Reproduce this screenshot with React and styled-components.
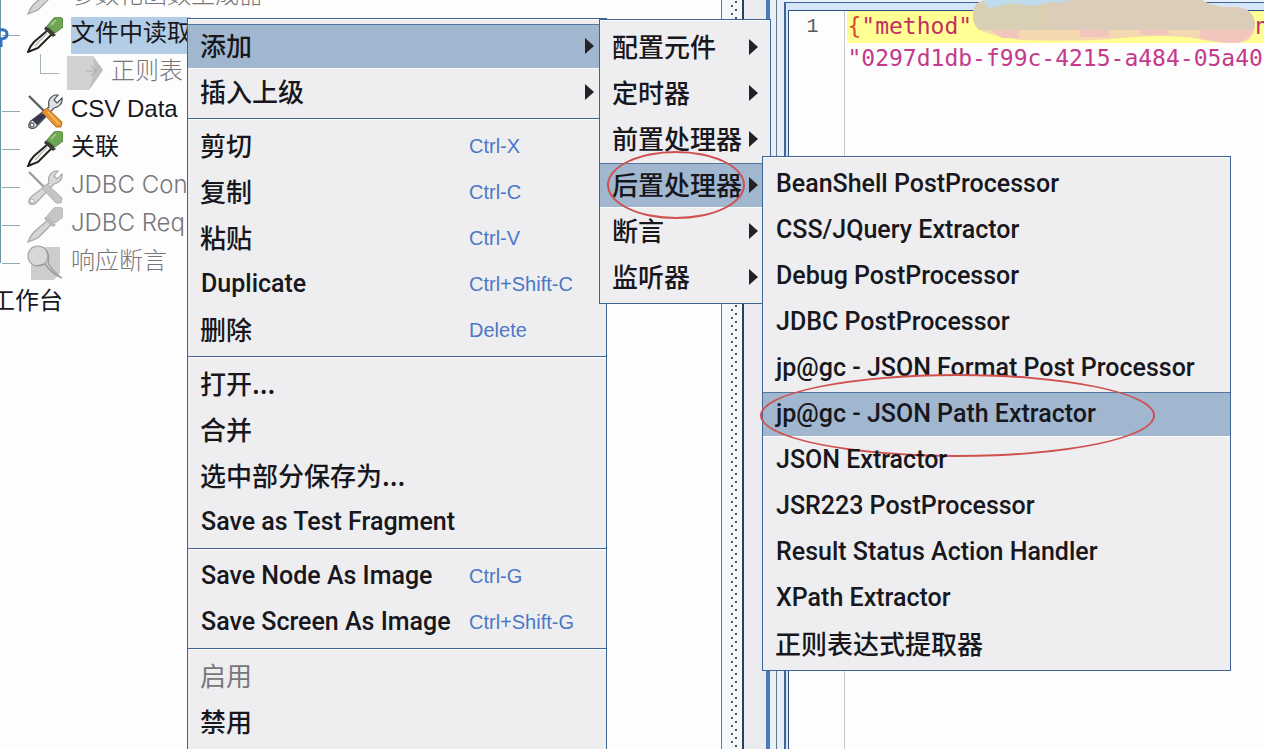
import React from "react";
import styled, { createGlobalStyle, css } from "styled-components";

const cjk = '"Noto Sans CJK SC"';
const line = "#3f6496";

const GlobalStyle = createGlobalStyle`
  * { box-sizing: border-box; }
  body { margin: 0; background: #fdfdfe; }
  button { font: inherit; color: inherit; border: 0; background: none; padding: 0; text-align: left; }
  ul { list-style: none; margin: 0; padding: 0; }
`;

const Window = styled.div`
  position: relative;
  display: flex;
  height: 100vh;
  overflow: hidden;
  font-family: "Liberation Sans", ${cjk}, sans-serif;
`;

/* ---------- test plan tree ---------- */

const TreePane = styled.nav`
  flex: 0 0 calc(57% + 2px);
  overflow: hidden;
  background: #fdfdfe;
  border-right: 1px solid #5f7f90;
`;

const TreeList = styled.ul`
  margin-top: -22px;
`;

const Branch = styled.ul`
  padding-left: 1px;
  background: linear-gradient(#6b98a4, #6b98a4) 0 0 / 1px 285px no-repeat;
`;

const TreeRow = styled.li`
  display: flex;
  align-items: center;
  height: 38px;
  font-family: ${(p) => (p.$off ? "Inter" : '"Liberation Sans"')}, ${cjk}, sans-serif;
  font-size: 24px;
  line-height: 32px;
  white-space: nowrap;
  color: ${(p) => (p.$off ? "#77777a" : "#17171c")};
  font-weight: ${(p) => (p.$off ? 300 : 400)};
`;

const RootRow = styled(TreeRow)`
  margin-left: -9px;
`;

const Elbow = styled.span`
  flex: none;
  width: 18px;
  height: 1px;
  margin: 0 7px 0 1px;
  background: ${(p) => (p.$hidden ? "transparent" : "#8fa9b5")};
`;

const ChildElbow = styled.span`
  flex: none;
  align-self: flex-start;
  width: 19px;
  height: 20px;
  margin: 0 8px 0 39px;
  border: solid #a3b4bd;
  border-width: 0 0 1px 1px;
`;

const TreeLabel = styled.button`
  height: 37px;
  margin-left: 8px;
  padding-bottom: 4px;
  background: ${(p) => (p.$selected ? "#b3cde6" : "transparent")};
`;

const IconSvg = styled.svg`
  flex: none;
  width: 36px;
  height: 36px;
`;

const Handle = styled.svg`
  position: absolute;
  left: 0;
  top: 27px;
  width: 9px;
  height: 22px;
`;

function Dropper({ off }) {
  const ink = off ? "#a5a5a5" : "#20201e";
  return (
    <IconSvg viewBox="0 0 36 36" aria-hidden="true">
      <path d="M22 12 L26 16 L11 31 Q6 33 1 35 Q3 29 7 25Z" fill={off ? "#d5d5d5" : "#fbfbf8"} stroke={ink} strokeWidth={off ? 1.2 : 2} />
      {!off && <path d="M20 16 L8 29" stroke="#bcbcb4" strokeWidth="1.5" />}
      <path d="M19 9 L29 18 L26 20 L17 12Z" fill={off ? "#b9b9b9" : "#38402f"} />
      <path d="M20 9 L27 1 Q33 -1 36 2 V10 L28 16Z" fill={off ? "#c6c6c6" : "#6fa653"} stroke={off ? "#b5b5b5" : "#55853f"} />
      {!off && <path d="M24 8 L29 3" stroke="#9cc886" strokeWidth="2" fill="none" />}
    </IconSvg>
  );
}

function Tools({ off }) {
  return (
    <IconSvg viewBox="0 0 36 36" aria-hidden="true">
      <path d="M22 14 Q20 5 28 2 L31 2 L27 7 L30 10 L35 5 Q36 13 27 15 L9 34 Q5 37 2 34 Q1 31 4 28Z" fill={off ? "#d8d8d8" : "#dfe2e4"} stroke={off ? "#a9a9a9" : "#4b5054"} strokeWidth="1.2" />
      {!off && <path d="M15 20 L19 23 L10 32 L5 27Z" fill="#35384d" />}
      <circle cx="5" cy="32" r="2" fill="#fff" stroke={off ? "#aaa" : "#333"} />
      <path d="M2 3 L18 19" stroke={off ? "#9d9d9d" : "#5d6064"} strokeWidth="2.4" />
      <path d="M15 19 L20 15 L35 29 L34 34 L29 34Z" fill={off ? "#c4c4c4" : "#e6962f"} stroke={off ? "#b0b0b0" : "#b96c1a"} />
      {!off && <path d="M21 19 L32 31" stroke="#f8bd6c" strokeWidth="1.5" />}
    </IconSvg>
  );
}

function ArrowPage() {
  return (
    <IconSvg viewBox="0 0 36 36" aria-hidden="true">
      <path d="M0 1 H26 L36 15 L22 35 H0Z" fill="#d2d2d2" />
      <path d="M26 1 L36 15 L22 35 L28 15Z" fill="#bebebe" />
      <path d="M19 16 H28 M24 11 L29 16 L24 21" fill="none" stroke="#b0b0b0" strokeWidth="1.2" />
    </IconSvg>
  );
}

function Lens() {
  return (
    <IconSvg viewBox="0 0 36 36" aria-hidden="true">
      <path d="M4 2 H33 V28 L27 35 H4Z" fill="#cdcdcd" />
      <ellipse cx="11" cy="11" rx="10" ry="10" fill="#d8d8d8" stroke="#a3a3a3" strokeWidth="1.2" />
      <path d="M19 5 Q23 11 21 18 Q27 28 35 33 Q25 29 18 19 L9 21" fill="none" stroke="#9d9d9d" strokeWidth="1.4" />
    </IconSvg>
  );
}

/* ---------- splitter and editor ---------- */

const Splitter = styled.div`
  flex: 0 0 22px;
  display: flex;
  padding-left: 8px;
  background: #f4f7fc;
  border-right: 2px solid #26415e;
`;

const Grip = styled.div`
  width: 8px;
  background: radial-gradient(circle at 6px 2px, #50555c 1px, transparent 1px),
    radial-gradient(circle at 2px 6px, #50555c 1px, transparent 1px);
  background-size: 8px 8px;
`;

const RightPane = styled.main`
  flex: 1;
  min-width: 0;
  display: flex;
  background: #ebebef;
  padding-left: 22px;
`;

const Frame = styled.div`
  flex: 1;
  min-width: 0;
  display: flex;
  background: #e6f0fb;
  border-left: 4px solid #4c78b8;
  padding-left: 6px;
`;

const InnerFrame = styled.div`
  flex: 1;
  min-width: 0;
  display: flex;
  border-left: 1px solid #6c7680;
  padding: 2px 0 0 7px;
`;

const EditorFrame = styled.div`
  flex: 1;
  min-width: 0;
  display: flex;
  background: #d4e6f8;
  border: solid ${line};
  border-width: 1px 0 0 2px;
  padding: 7px 0 0 2px;
`;

const Editor = styled.section`
  flex: 1;
  min-width: 0;
  display: flex;
  border: solid #2c5282;
  border-width: 1px 0 0 1px;
  background: #fdfdfe;
  font-family: "DejaVu Sans Mono", monospace;
  font-size: 23px;
  line-height: 32px;
`;

const Gutter = styled.div`
  flex: 0 0 56px;
  border-right: 1px solid #c9c9cd;
  padding-right: 26px;
  text-align: right;
  font-family: "Liberation Mono", monospace;
  font-size: 20px;
  color: #55585c;
`;

const Code = styled.div`
  flex: 1;
  min-width: 0;
  padding-left: 2px;
  overflow: hidden;
  white-space: nowrap;
  color: #c4398c;
`;

const CodeLine = styled.div`
  display: flex;
  height: 32px;
  line-height: 30px;
  background: ${(p) => (p.$current ? "#ffff94" : "transparent")};
  color: ${(p) => (p.$current ? "#c32f62" : "inherit")};
`;

const Brace = styled.span`
  color: #dd4a2a;
`;

const MaskGap = styled.span`
  flex: none;
  width: 283px;
`;

const Mask = styled.svg`
  position: absolute;
  left: 972px;
  top: 0;
  width: 284px;
  height: 44px;
`;

/* ---------- menus ---------- */

const Menu = styled.div`
  position: absolute;
  left: ${(p) => p.$x}px;
  top: ${(p) => p.$y}px;
  width: ${(p) => p.$w}px;
  min-height: ${(p) => (p.$tall ? "100%" : "0")};
  border: 1px solid ${line};
  background: #eeeef0;
  color: #17171d;
`;

const Group = styled.div`
  display: flex;
  flex-direction: column;
  gap: 2px;
  padding: 5px 0 4px;
  box-shadow: inset 0 1px #fbfcff;
  & + & { border-top: 1px solid ${line}; }
`;

const Item = styled.button`
  position: relative;
  display: flex;
  align-items: center;
  height: 44px;
  padding: 0 12px;
  white-space: nowrap;
  ${(p) =>
    p.$active &&
    css`
      background: #a1b7d0;
      box-shadow: inset 0 1px #55779f, 0 1px #fafbfd;
    `}
  &:disabled { color: #77777b; }
`;

const Label = styled.span`
  flex: 1 0 auto;
  ${(p) =>
    p.$latin
      ? css`
          padding-left: 1px;
          font: 500 25px/32px Roboto, sans-serif;
        `
      : css`
          padding-bottom: 3px;
          font: ${p.$thin ? 400 : 500} 26px/36px ${cjk}, sans-serif;
        `}
`;

const Shortcut = styled.kbd`
  flex: 0 0 125px;
  font: 20px "Liberation Sans", sans-serif;
  color: #4c78c6;
`;

const Arrow = styled.svg`
  flex: none;
  width: 9px;
  height: 16px;
  fill: #222227;
`;

const Ring = styled.span`
  position: absolute;
  left: ${(p) => p.$x}px;
  top: ${(p) => p.$y}px;
  width: ${(p) => p.$w}px;
  height: ${(p) => p.$h}px;
  border: 2px solid #d0504e;
  border-radius: 50%;
  pointer-events: none;
`;

function MenuItem({ text, keys, sub, active, disabled, children }) {
  return (
    <Item type="button" role="menuitem" $active={active} disabled={disabled}>
      <Label $latin={/^[A-Za-z]/.test(text)} $thin={disabled}>{text}</Label>
      {keys && <Shortcut>{keys}</Shortcut>}
      {sub && (
        <Arrow viewBox="0 0 9 16" aria-hidden="true">
          <path d="M0 0 L9 8 L0 16Z" />
        </Arrow>
      )}
      {children}
    </Item>
  );
}

const contextGroups = [
  [{ text: "添加", sub: true, active: true }, { text: "插入上级", sub: true }],
  [
    { text: "剪切", keys: "Ctrl-X" },
    { text: "复制", keys: "Ctrl-C" },
    { text: "粘贴", keys: "Ctrl-V" },
    { text: "Duplicate", keys: "Ctrl+Shift-C" },
    { text: "删除", keys: "Delete" },
  ],
  [{ text: "打开..." }, { text: "合并" }, { text: "选中部分保存为..." }, { text: "Save as Test Fragment" }],
  [
    { text: "Save Node As Image", keys: "Ctrl-G" },
    { text: "Save Screen As Image", keys: "Ctrl+Shift-G" },
  ],
  [{ text: "启用", disabled: true }, { text: "禁用" }],
];

const addItems = ["配置元件", "定时器", "前置处理器", "后置处理器", "断言", "监听器"];

const postProcessors = [
  "BeanShell PostProcessor",
  "CSS/JQuery Extractor",
  "Debug PostProcessor",
  "JDBC PostProcessor",
  "jp@gc - JSON Format Post Processor",
  "jp@gc - JSON Path Extractor",
  "JSON Extractor",
  "JSR223 PostProcessor",
  "Result Status Action Handler",
  "XPath Extractor",
  "正则表达式提取器",
];

const treeNodes = [
  { icon: <Dropper off />, text: "参数化函数生成器", off: true, noElbow: true },
  { icon: <Dropper />, text: "文件中读取", selected: true },
  { icon: <ArrowPage />, text: "正则表", off: true, child: true },
  { icon: <Tools />, text: "CSV Data" },
  { icon: <Dropper />, text: "关联" },
  { icon: <Tools off />, text: "JDBC Con", off: true },
  { icon: <Dropper off />, text: "JDBC Req", off: true },
  { icon: <Lens />, text: "响应断言", off: true },
];

export default function App() {
  return (
    <>
      <GlobalStyle />
      <Window>
        <TreePane>
          <TreeList>
            <li>
              <Branch>
                {treeNodes.map((n) => (
                  <TreeRow key={n.text} $off={n.off}>
                    {n.child ? <ChildElbow /> : <Elbow $hidden={n.noElbow} />}
                    {n.icon}
                    <TreeLabel type="button" $selected={n.selected}>{n.text}</TreeLabel>
                  </TreeRow>
                ))}
              </Branch>
            </li>
            <RootRow>工作台</RootRow>
          </TreeList>
          <Handle viewBox="0 0 9 22" aria-hidden="true">
            <path d="M0 3 Q7 2 7 7 Q7 12 0 12 M1 12 V20" fill="none" stroke="#3671bd" strokeWidth="3" />
          </Handle>
        </TreePane>

        <Splitter>
          <Grip />
        </Splitter>

        <RightPane>
          <Frame>
            <InnerFrame>
              <EditorFrame>
                <Editor>
                  <Gutter>1</Gutter>
                  <Code>
                    <CodeLine $current>
                      <Brace>{"{"}</Brace>"method"
                      <MaskGap />n
                    </CodeLine>
                    <CodeLine>"0297d1db-f99c-4215-a484-05a40</CodeLine>
                  </Code>
                </Editor>
              </EditorFrame>
            </InnerFrame>
          </Frame>
        </RightPane>

        <Mask viewBox="0 0 284 44" aria-hidden="true">
          <path d="M1 14 Q1 2 14 0 H230 Q241 8 262 7 Q283 8 283 25 Q283 43 262 43 Q242 43 222 38 Q190 34 150 38 Q110 42 50 40 Q20 36 10 31 Q1 28 1 14Z" fill="#f4d9b0" />
          <path d="M1 14 Q1 2 14 0 H230 Q241 8 262 7 Q283 8 283 25 L282 30 H8 Q1 26 1 14Z" fill="#dccdba" />
          <path d="M1 14 Q1 2 14 0 H78 V30 H8 Q1 26 1 14Z" fill="#d8cfb4" />
          <path d="M10 0 H98 Q90 4 78 2 L60 6 L40 3 L18 8Z" fill="#bfdcec" />
          <path d="M18 30 H47 V38 H30Z M108 30 H137 V37 H108Z M168 30 H197 V35 H168Z M228 30 H281 Q276 43 260 43 Q240 42 228 38Z" fill="#f3c6bd" />
        </Mask>

        <Menu role="menu" $x={187} $y={18} $w={420} $tall>
          {contextGroups.map((group, i) => (
            <Group key={i}>
              {group.map((item) => (
                <MenuItem key={item.text} {...item} />
              ))}
            </Group>
          ))}
        </Menu>

        <Menu role="menu" $x={599} $y={19} $w={172}>
          <Group>
            {addItems.map((text) => (
              <MenuItem key={text} text={text} sub active={text === "后置处理器"}>
                {text === "后置处理器" && <Ring $x={7} $y={-12} $w={138} $h={68} />}
              </MenuItem>
            ))}
          </Group>
        </Menu>

        <Menu role="menu" $x={762} $y={156} $w={469}>
          <Group>
            {postProcessors.map((text) => (
              <MenuItem key={text} text={text} active={text.includes("JSON Path")}>
                {text.includes("JSON Path") && <Ring $x={-3} $y={-18} $w={395} $h={83} />}
              </MenuItem>
            ))}
          </Group>
        </Menu>
      </Window>
    </>
  );
}
